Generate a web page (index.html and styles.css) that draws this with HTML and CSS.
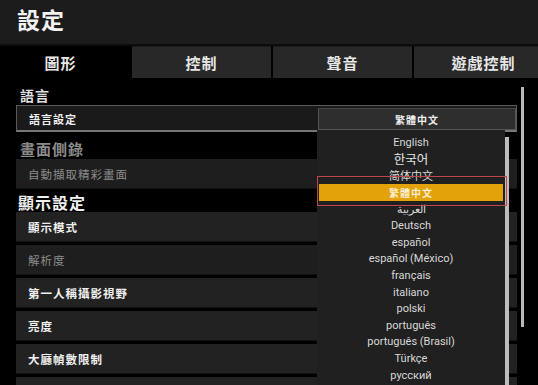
FILE: index.html
```html
<!DOCTYPE html>
<html lang="zh-Hant">
<head>
    <meta charset="UTF-8">
    <meta name="viewport" content="width=device-width, initial-scale=1.0">
    <title>設定</title>
    <link rel="stylesheet" href="styles.css">
</head>
<body>
    <div class="header">
        <h1>設定</h1>
    </div>
    <div class="tabs">
        <div class="tab active">圖形</div>
        <div class="tab">控制</div>
        <div class="tab">聲音</div>
        <div class="tab">遊戲控制</div>
    </div>
    <div class="content">
        <div class="settings">
            <h3 class="section">語言</h3>
            <div class="row focused small">語言設定</div>
            <h3 class="section dim">畫面側錄</h3>
            <div class="row dim">自動擷取精彩畫面</div>
            <h3 class="section big">顯示設定</h3>
            <div class="row">顯示模式</div>
            <div class="row dim">解析度</div>
            <div class="row">第一人稱攝影視野</div>
            <div class="row">亮度</div>
            <div class="row">大廳幀數限制</div>
            <div class="row"></div>
        </div>
        <div class="scrollbar"></div>

        <div class="dropdown">
            <div class="dropdown-head">繁體中文</div>
            <div class="dropdown-list">
                <div class="options">
                    <div class="option">English</div>
                    <div class="option ko">한국어</div>
                    <div class="option">简体中文</div>
                    <div class="option selected">繁體中文</div>
                    <div class="option">العربية</div>
                    <div class="option">Deutsch</div>
                    <div class="option">español</div>
                    <div class="option">español (México)</div>
                    <div class="option">français</div>
                    <div class="option">italiano</div>
                    <div class="option">polski</div>
                    <div class="option">português</div>
                    <div class="option">português (Brasil)</div>
                    <div class="option">Türkçe</div>
                    <div class="option">русский</div>
                </div>
                <div class="list-scroll"></div>
            </div>
            <div class="mark"></div>
        </div>
    </div>
</body>
</html>
```

FILE: styles.css
```css
html, body {
    margin: 0;
    height: 100%;
    overflow: hidden;
    background-color: #000;
    color: #fff;
    font-family: "Noto Sans CJK TC", "Noto Sans", sans-serif;
}
.header {
    height: 44px;
    background-color: #1c1c1c;
    border-bottom: 2px solid #0c0c0c;
}
.header h1 {
    margin: 0;
    padding: 2px 0 0 17px;
    font-size: 23px;
    line-height: 34px;
    font-weight: bold;
    letter-spacing: 1px;
    color: #f2f2f2;
}
.tabs {
    display: grid;
    grid-template-columns: repeat(4, 139px);
    gap: 2px;
    height: 32px;
    margin-left: -9px;
    background-color: #000;
}
.tab {
    display: flex;
    justify-content: center;
    align-items: center;
    background-color: #282828;
    border-top: 1px solid #1a1a1a;
    font-size: 15px;
    font-weight: bold;
    letter-spacing: 1px;
    color: #e6e6e6;
}
.tab.active {
    background-color: #000;
    border-top-color: #000;
}
.content {
    position: relative;
    height: 307px;
}
.settings {
    padding: 7px 0 0 16px;
    width: 501px;
}
.section {
    margin: 0;
    padding-left: 4px;
    font-size: 14px;
    line-height: 20px;
    font-weight: bold;
    letter-spacing: 1px;
    color: #e0e0e0;
}
.section.dim {
    color: #8a8a8a;
    margin-top: 7px;
    font-size: 15px;
}
.section.big {
    color: #f0f0f0;
    font-size: 16px;
    line-height: 20px;
    padding-left: 2px;
}
.row {
    box-sizing: border-box;
    height: 30px;
    margin-bottom: 3px;
    padding-left: 12px;
    display: flex;
    align-items: center;
    background-color: #222;
    border-bottom: 1px solid #111;
    font-size: 11.5px;
    font-weight: bold;
    letter-spacing: 1px;
    color: #f0f0f0;
}
.row.small {
    height: 27px;
    margin-bottom: 0;
    padding-top: 2px;
    font-size: 11px;
    background-color: #1a1a1a;
    border: 1px solid #5a5a5a;
    border-bottom: 2px solid #777;
}
.row.dim {
    color: #8c8c8c;
    font-weight: normal;
    background-color: #1e1e1e;
}
.scrollbar {
    position: absolute;
    left: 521px;
    top: 9px;
    width: 3px;
    height: 240px;
    background-color: #b8b8b8;
}
.dropdown {
    position: absolute;
    left: 317px;
    top: 30px;
    width: 199px;
}
.dropdown-head {
    height: 20px;
    margin-left: 1px;
    display: flex;
    justify-content: center;
    align-items: center;
    background-color: #2e2e2e;
    border: 1px solid #555;
    border-top-color: #444;
    font-size: 10px;
    font-weight: bold;
    letter-spacing: 1px;
    color: #eee;
}
.dropdown-list {
    display: flex;
    height: 260px;
}
.options {
    width: 188px;
    padding-top: 4px;
    background-color: #202020;
}
.option {
    height: 16.6px;
    display: flex;
    justify-content: center;
    align-items: center;
    font-family: "Roboto", "Noto Sans CJK KR", "Noto Sans CJK SC", "Noto Sans", sans-serif;
    font-size: 11px;
    color: #d8d8d8;
}
.option.ko {
    font-size: 12.5px;
    color: #e6e6e6;
}
.option.selected {
    margin: 0 2px;
    height: 17px;
    background-color: #e3a10a;
    color: #fbeed0;
    font-family: "Noto Sans CJK TC", sans-serif;
    font-size: 10px;
    font-weight: bold;
    letter-spacing: 1px;
}
.list-scroll {
    width: 4px;
    height: 100%;
    margin-top: 7px;
    background-color: #bdbdbd;
}
.mark {
    position: absolute;
    left: 0;
    top: 68px;
    width: 188px;
    height: 28px;
    border: 1.5px solid #c0454f;
    pointer-events: none;
}
```
